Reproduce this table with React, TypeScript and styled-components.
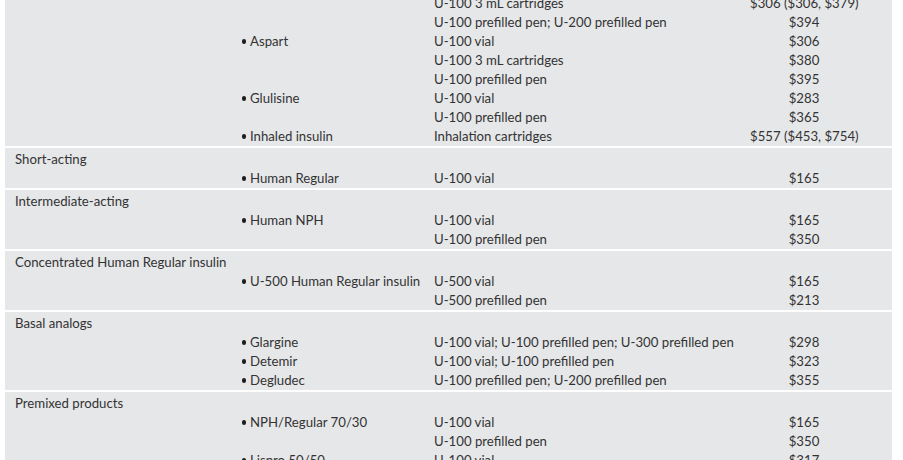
import styled, { createGlobalStyle } from 'styled-components'

const GlobalStyle = createGlobalStyle`
  html, body {
    margin: 0;
    padding: 0;
    background: #ffffff;
  }
  #root {
    width: 903px;
    height: 460px;
    overflow: hidden;
  }
`

type Item = { form: string; price: string }
type Drug = { name?: string; items: Item[] }
type Group = { category?: string; drugs: Drug[] }

const groups: Group[] = [
  {
    drugs: [
      {
        items: [
          { form: 'U-100 3 mL cartridges', price: '$306 ($306, $379)' },
          { form: 'U-100 prefilled pen; U-200 prefilled pen', price: '$394' },
        ],
      },
      {
        name: 'Aspart',
        items: [
          { form: 'U-100 vial', price: '$306' },
          { form: 'U-100 3 mL cartridges', price: '$380' },
          { form: 'U-100 prefilled pen', price: '$395' },
        ],
      },
      {
        name: 'Glulisine',
        items: [
          { form: 'U-100 vial', price: '$283' },
          { form: 'U-100 prefilled pen', price: '$365' },
        ],
      },
      {
        name: 'Inhaled insulin',
        items: [{ form: 'Inhalation cartridges', price: '$557 ($453, $754)' }],
      },
    ],
  },
  {
    category: 'Short-acting',
    drugs: [{ name: 'Human Regular', items: [{ form: 'U-100 vial', price: '$165' }] }],
  },
  {
    category: 'Intermediate-acting',
    drugs: [
      {
        name: 'Human NPH',
        items: [
          { form: 'U-100 vial', price: '$165' },
          { form: 'U-100 prefilled pen', price: '$350' },
        ],
      },
    ],
  },
  {
    category: 'Concentrated Human Regular insulin',
    drugs: [
      {
        name: 'U-500 Human Regular insulin',
        items: [
          { form: 'U-500 vial', price: '$165' },
          { form: 'U-500 prefilled pen', price: '$213' },
        ],
      },
    ],
  },
  {
    category: 'Basal analogs',
    drugs: [
      { name: 'Glargine', items: [{ form: 'U-100 vial; U-100 prefilled pen; U-300 prefilled pen', price: '$298' }] },
      { name: 'Detemir', items: [{ form: 'U-100 vial; U-100 prefilled pen', price: '$323' }] },
      { name: 'Degludec', items: [{ form: 'U-100 prefilled pen; U-200 prefilled pen', price: '$355' }] },
    ],
  },
  {
    category: 'Premixed products',
    drugs: [
      {
        name: 'NPH/Regular 70/30',
        items: [
          { form: 'U-100 vial', price: '$165' },
          { form: 'U-100 prefilled pen', price: '$350' },
        ],
      },
      { name: 'Lispro 50/50', items: [{ form: 'U-100 vial', price: '$317' }] },
    ],
  },
]

// top of the table is scrolled out of the shot, hence the negative margin
const Table = styled.div`
  margin: -8px 0 0 5px;
  width: 887px;
  display: flex;
  flex-direction: column;
  gap: 2px;
  font-family: Lato, 'Liberation Sans', sans-serif;
  font-size: 13.2px;
  color: #333333;
`

const GroupBox = styled.div`
  background: #e6e7e9;
  padding: 1px 0;
`

const Row = styled.div`
  box-sizing: border-box;
  display: grid;
  grid-template-columns: 226px 193px 316px 108px;
  padding: 2px 34px 0 10px;
  height: 19px;
  line-height: 17px;
  white-space: nowrap;
`

const Name = styled.span`
  display: flex;
  align-items: center;
`

const Bullet = styled.span`
  display: inline-block;
  width: 4.5px;
  height: 4.5px;
  border-radius: 50%;
  background: #1e1e1e;
  margin: 0 4px 0 0.5px;
`

const Price = styled.span`
  text-align: center;
`

const App = function () {
  return (
    <>
      <GlobalStyle />
      <Table>
        {groups.map((group, gi) => (
          <GroupBox key={gi}>
            {group.category && (
              <Row>
                <span>{group.category}</span>
              </Row>
            )}
            {group.drugs.map((drug, di) =>
              drug.items.map((item, ii) => (
                <Row key={di + '-' + ii}>
                  <span />
                  {drug.name && ii === 0 ? (
                    <Name>
                      <Bullet />
                      {drug.name}
                    </Name>
                  ) : (
                    <span />
                  )}
                  <span>{item.form}</span>
                  <Price>{item.price}</Price>
                </Row>
              ))
            )}
          </GroupBox>
        ))}
      </Table>
    </>
  )
}

export default App
